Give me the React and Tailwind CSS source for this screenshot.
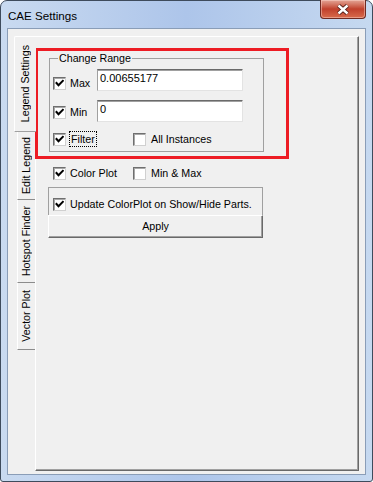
import React from "react";

function CheckBox({ checked }) {
    return (
        <span className="flex h-[13px] w-[13px] shrink-0 items-center justify-center border border-[#6f6f6f] border-r-[#d0d0d0] border-b-[#d0d0d0] bg-white shadow-[inset_1px_1px_0_#a8a8a8]">
            {checked && (
                <svg width="9" height="9" viewBox="0 0 9 9">
                    <path d="M1.5 4 L3.5 6.2 L7.8 1.8" stroke="#000" strokeWidth="2" fill="none" strokeLinecap="square" />
                </svg>
            )}
        </span>
    );
}

function TextBox({ value }) {
    return (
        <div className="h-[22px] w-[146px] border border-[#e3e3e3] border-t-[#6a6a6a] border-l-[#a0a0a0] bg-white pl-[2px] pt-[2px] text-[11px] leading-[13px] text-black shadow-[inset_0_1px_0_#a0a0a0]">
            {value}
        </div>
    );
}

function SideTab({ label, selected, height }) {
    return (
        <div
            className={
                selected
                    ? "relative z-10 flex w-[22px] items-center justify-center rounded-tl-[2px] border-t border-l border-b border-t-white border-l-white border-b-[#a0a0a0] bg-[#f0f0f0]"
                    : "ml-[3px] flex w-[18px] items-center justify-center border-l border-b border-l-white border-b-[#8c8c8c] bg-[#f0f0f0]"
            }
            style={{ height }}
        >
            <span className="rotate-180 whitespace-nowrap text-[10.7px] leading-[13px] text-black [writing-mode:vertical-rl]">
                {label}
            </span>
        </div>
    );
}

export default function App() {
    return (
        <div className="h-[482px] w-[373px] overflow-hidden bg-white font-['Liberation_Sans',Arial,sans-serif]">
            <div className="flex h-[482px] w-[373px] flex-col rounded-t-[7px] rounded-b-[3px] border border-[#3e4b5c] bg-linear-to-r from-[#c9daf0] via-[#adc5ea] to-[#c6d9f0]">
                {/* Title bar */}
                <div className="flex h-[27px] shrink-0 items-start justify-between">
                    <span className="pl-[7px] pt-[7px] text-[11.6px] leading-[15px] text-black">CAE Settings</span>
                    <div className="-mt-px mr-[6px] flex h-[19px] w-[46px] items-center justify-center rounded-b-[4px] border border-t-0 border-[#6e2a22] bg-linear-to-b from-[#e3a596] via-[#c0402c] to-[#d86a4c] shadow-[inset_0_0_0_1px_rgba(255,220,210,0.45)]">
                        <svg width="14" height="11" viewBox="0 0 14 11">
                            <path d="M2.5 1.5 L11.5 9.5 M11.5 1.5 L2.5 9.5" stroke="#4a1a14" strokeWidth="4.2" fill="none" />
                            <path d="M2.5 1.5 L11.5 9.5 M11.5 1.5 L2.5 9.5" stroke="#ffffff" strokeWidth="2.4" fill="none" />
                        </svg>
                    </div>
                </div>

                {/* Client area */}
                <div className="mx-[6px] flex h-[447px] shrink-0 border border-[#8a9db7] bg-[#f0f0f0] pl-[6px] pt-[7px]">
                    {/* Vertical tabs */}
                    <div className="flex w-[21px] shrink-0 flex-col">
                        <SideTab label="Legend Settings" selected height={96} />
                        <SideTab label="Edit Legend" height={68} />
                        <SideTab label="Hotspot Finder" height={83} />
                        <SideTab label="Vector Plot" height={67} />
                    </div>

                    {/* Tab page */}
                    <div className="relative h-[435px] w-[324px] shrink-0 border border-t-white border-l-white border-r-[#696969] border-b-[#696969] shadow-[inset_-1px_-1px_0_#a0a0a0] text-[10.7px] leading-[13px] text-black">
                        <fieldset className="ml-[13px] mt-[15px] w-[215px] border border-[#a0a0a0] pb-[4px] pl-[3px]">
                            <legend className="ml-[5px] px-[1px] text-[10.7px] leading-[13px]">Change Range</legend>

                            <div className="mt-[4px] flex h-[22px] items-start">
                                <div className="mt-[8px] flex w-[44px] items-center">
                                    <CheckBox checked />
                                    <span className="ml-[4px]">Max</span>
                                </div>
                                <TextBox value="0.00655177" />
                            </div>

                            <div className="mt-[9px] flex h-[22px] items-start">
                                <div className="mt-[6px] flex w-[44px] items-center">
                                    <CheckBox checked />
                                    <span className="ml-[4px]">Min</span>
                                </div>
                                <TextBox value="0" />
                            </div>

                            <div className="mt-[9px] flex h-[16px] items-center">
                                <div className="flex w-[80px] items-center">
                                    <CheckBox checked />
                                    <span className="ml-[3px] border border-dotted border-black px-[1px] leading-[14px]">Filter</span>
                                </div>
                                <CheckBox />
                                <span className="ml-[5px]">All Instances</span>
                            </div>
                        </fieldset>

                        <div className="ml-[17px] mt-[15px] flex h-[13px] items-center">
                            <div className="flex w-[80px] items-center">
                                <CheckBox checked />
                                <span className="ml-[4px]">Color Plot</span>
                            </div>
                            <CheckBox />
                            <span className="ml-[5px]">Min &amp; Max</span>
                        </div>

                        <div className="ml-[12px] mt-[7px] w-[215px]">
                            <div className="flex h-[28px] items-start border border-b-0 border-[#a0a0a0] pl-[4px] pt-[10px]">
                                <CheckBox checked />
                                <span className="ml-[4px]">Update ColorPlot on Show/Hide Parts.</span>
                            </div>
                            <div className="flex h-[23px] items-center justify-center border border-t-white border-l-white border-r-[#696969] border-b-[#696969] shadow-[inset_-1px_-1px_0_#a0a0a0]">
                                Apply
                            </div>
                        </div>

                        {/* Red highlight annotation */}
                        <div className="pointer-events-none absolute left-[-1px] top-[11px] h-[111px] w-[254px] border-[3px] border-[#ed1c24]" />
                    </div>
                </div>
            </div>
        </div>
    );
}
